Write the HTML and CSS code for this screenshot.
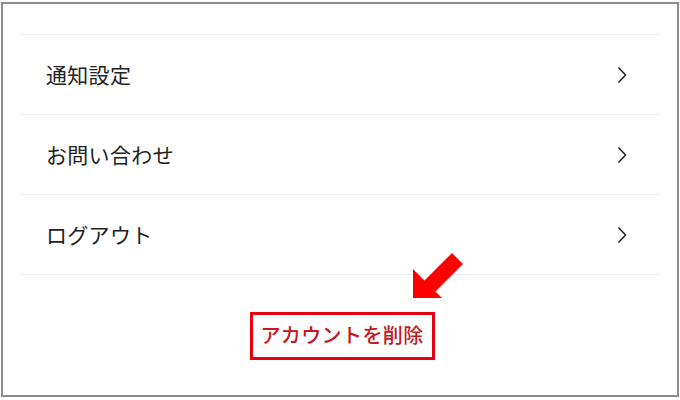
FILE: index.html
```html
<!DOCTYPE html>
<html lang="ja">
<head>
<meta charset="utf-8">
<link rel="stylesheet" href="styles.css">
</head>
<body>
<div class="frame">
  <ul class="menu">
    <li class="row"><span class="label">通知設定</span><svg class="chev" viewBox="0 0 10 18" width="10" height="18"><path d="M1.5 1.5 L8.5 9 L1.5 16.5" fill="none" stroke="#222" stroke-width="1.5"/></svg></li>
    <li class="row"><span class="label">お問い合わせ</span><svg class="chev" viewBox="0 0 10 18" width="10" height="18"><path d="M1.5 1.5 L8.5 9 L1.5 16.5" fill="none" stroke="#222" stroke-width="1.5"/></svg></li>
    <li class="row last"><span class="label">ログアウト</span><svg class="chev" viewBox="0 0 10 18" width="10" height="18"><path d="M1.5 1.5 L8.5 9 L1.5 16.5" fill="none" stroke="#222" stroke-width="1.5"/></svg></li>
  </ul>
  <div class="footer">
    <span class="delete">アカウントを削除</span>
  </div>
  <svg class="arrow" viewBox="0 0 680 400" width="680" height="400"><polygon points="413,298 413,269 424.5,280.5 452,253 463,264 435.5,291.5 442,298" fill="#f00"/></svg>
</div>
</body>
</html>
```
FILE: styles.css
```css
* { box-sizing: border-box; }
html, body { margin: 0; padding: 0; background: #fff; }
body {
  width: 680px;
  height: 400px;
  font-family: "Noto Sans CJK JP", "Noto Sans", sans-serif;
  color: #222;
}
.frame {
  position: relative;
  margin: 2px 1px 0 1px;
  width: 678px;
  height: 395px;
  border: 2px solid #8c8c8c;
  background: #fff;
}
.arrow {
  position: absolute;
  left: -3px;
  top: -4px;
  pointer-events: none;
}
.menu {
  list-style: none;
  margin: 30px 17px 0 17px;
  padding: 0;
}
.row {
  display: flex;
  align-items: center;
  justify-content: space-between;
  height: 80px;
  border-top: 1px solid #ececec;
  padding: 0 33px 0 26px;
}
.row.last { border-bottom: 1px solid #ececec; height: 81px; }
.label {
  font-size: 21px;
  line-height: 1;
  letter-spacing: 0.3px;
}
.chev { display: block; }
.footer {
  display: flex;
  justify-content: center;
  padding: 37px 0 0 5px;
}
.delete {
  display: inline-block;
  border: 3px solid #e60012;
  color: #c8161d;
  font-size: 20px;
  font-weight: 500;
  line-height: 1;
  padding: 10px 8px 12px 7px;
  letter-spacing: 0.4px;
}
```
